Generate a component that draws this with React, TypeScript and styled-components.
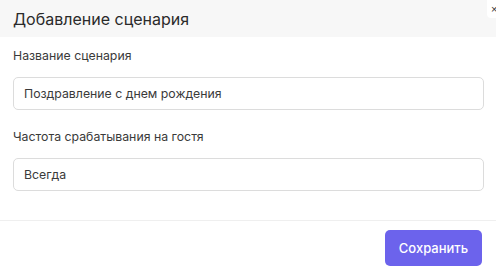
import React from "react"
import styled, { createGlobalStyle } from "styled-components";

const GlobalStyle = createGlobalStyle`
    html, body {
        margin: 0;
        padding: 0;
        background: #FFF;
    }
    body {
        font-family: Inter, "Noto Sans", "Liberation Sans", sans-serif;
        color: #2b2b2b;
    }
`

const Modal = styled.div`
    position: relative;
    width: 496px;
    height: 275px;
    background: #FFF;
    display: flex;
    flex-direction: column;
    overflow: hidden;
`

const Header = styled.div`
    height: 37px;
    background: #F7F7F7;
    display: flex;
    align-items: center;
    padding: 0 13px;
`

const Title = styled.h2`
    margin: 0;
    font-size: 16px;
    font-weight: 400;
    color: #2a2a2a;
`

const CloseButton = styled.button`
    position: absolute;
    top: 0;
    right: -10px;
    width: 19px;
    height: 18px;
    background: #FFF;
    border: none;
    border-radius: 0 0 0 4px;
    padding: 0 0 0 4px;
    font-size: 11px;
    line-height: 14px;
    color: #333;
    text-align: left;
    cursor: pointer;
`

const Body = styled.div`
    flex: 1;
    display: flex;
    flex-direction: column;
    gap: 19px;
    padding: 11px 12px 0 13px;
    border-bottom: 1px solid #EFEFEF;
`

const Field = styled.div`
    display: flex;
    flex-direction: column;
`

const Label = styled.label`
    font-size: 12.3px;
    line-height: 15px;
    color: #3a3a3a;
    margin-bottom: 14px;
`

const Input = styled.div`
    height: 33px;
    box-sizing: border-box;
    border: 1px solid #DCDCDC;
    border-radius: 5px;
    display: flex;
    align-items: center;
    padding: 0 10px;
    font-size: 12.3px;
    color: #3a3a3a;
`

const Footer = styled.div`
    height: 54px;
    display: flex;
    align-items: center;
    justify-content: flex-end;
    padding: 0 14px 0 0;
`

const SaveButton = styled.button`
    background: #6C63EC;
    color: #FFF;
    border: none;
    border-radius: 5px;
    width: 97px;
    height: 36px;
    font-family: inherit;
    font-size: 13px;
    font-weight: 500;
    cursor: pointer;
`

export default function App() {
    return (
        <>
            <GlobalStyle />
            <Modal>
                <Header>
                    <Title>Добавление сценария</Title>
                </Header>
                <CloseButton>×</CloseButton>
                <Body>
                    <Field>
                        <Label>Название сценария</Label>
                        <Input>Поздравление с днем рождения</Input>
                    </Field>
                    <Field>
                        <Label>Частота срабатывания на гостя</Label>
                        <Input>Всегда</Input>
                    </Field>
                </Body>
                <Footer>
                    <SaveButton>Сохранить</SaveButton>
                </Footer>
            </Modal>
        </>
    )
}
